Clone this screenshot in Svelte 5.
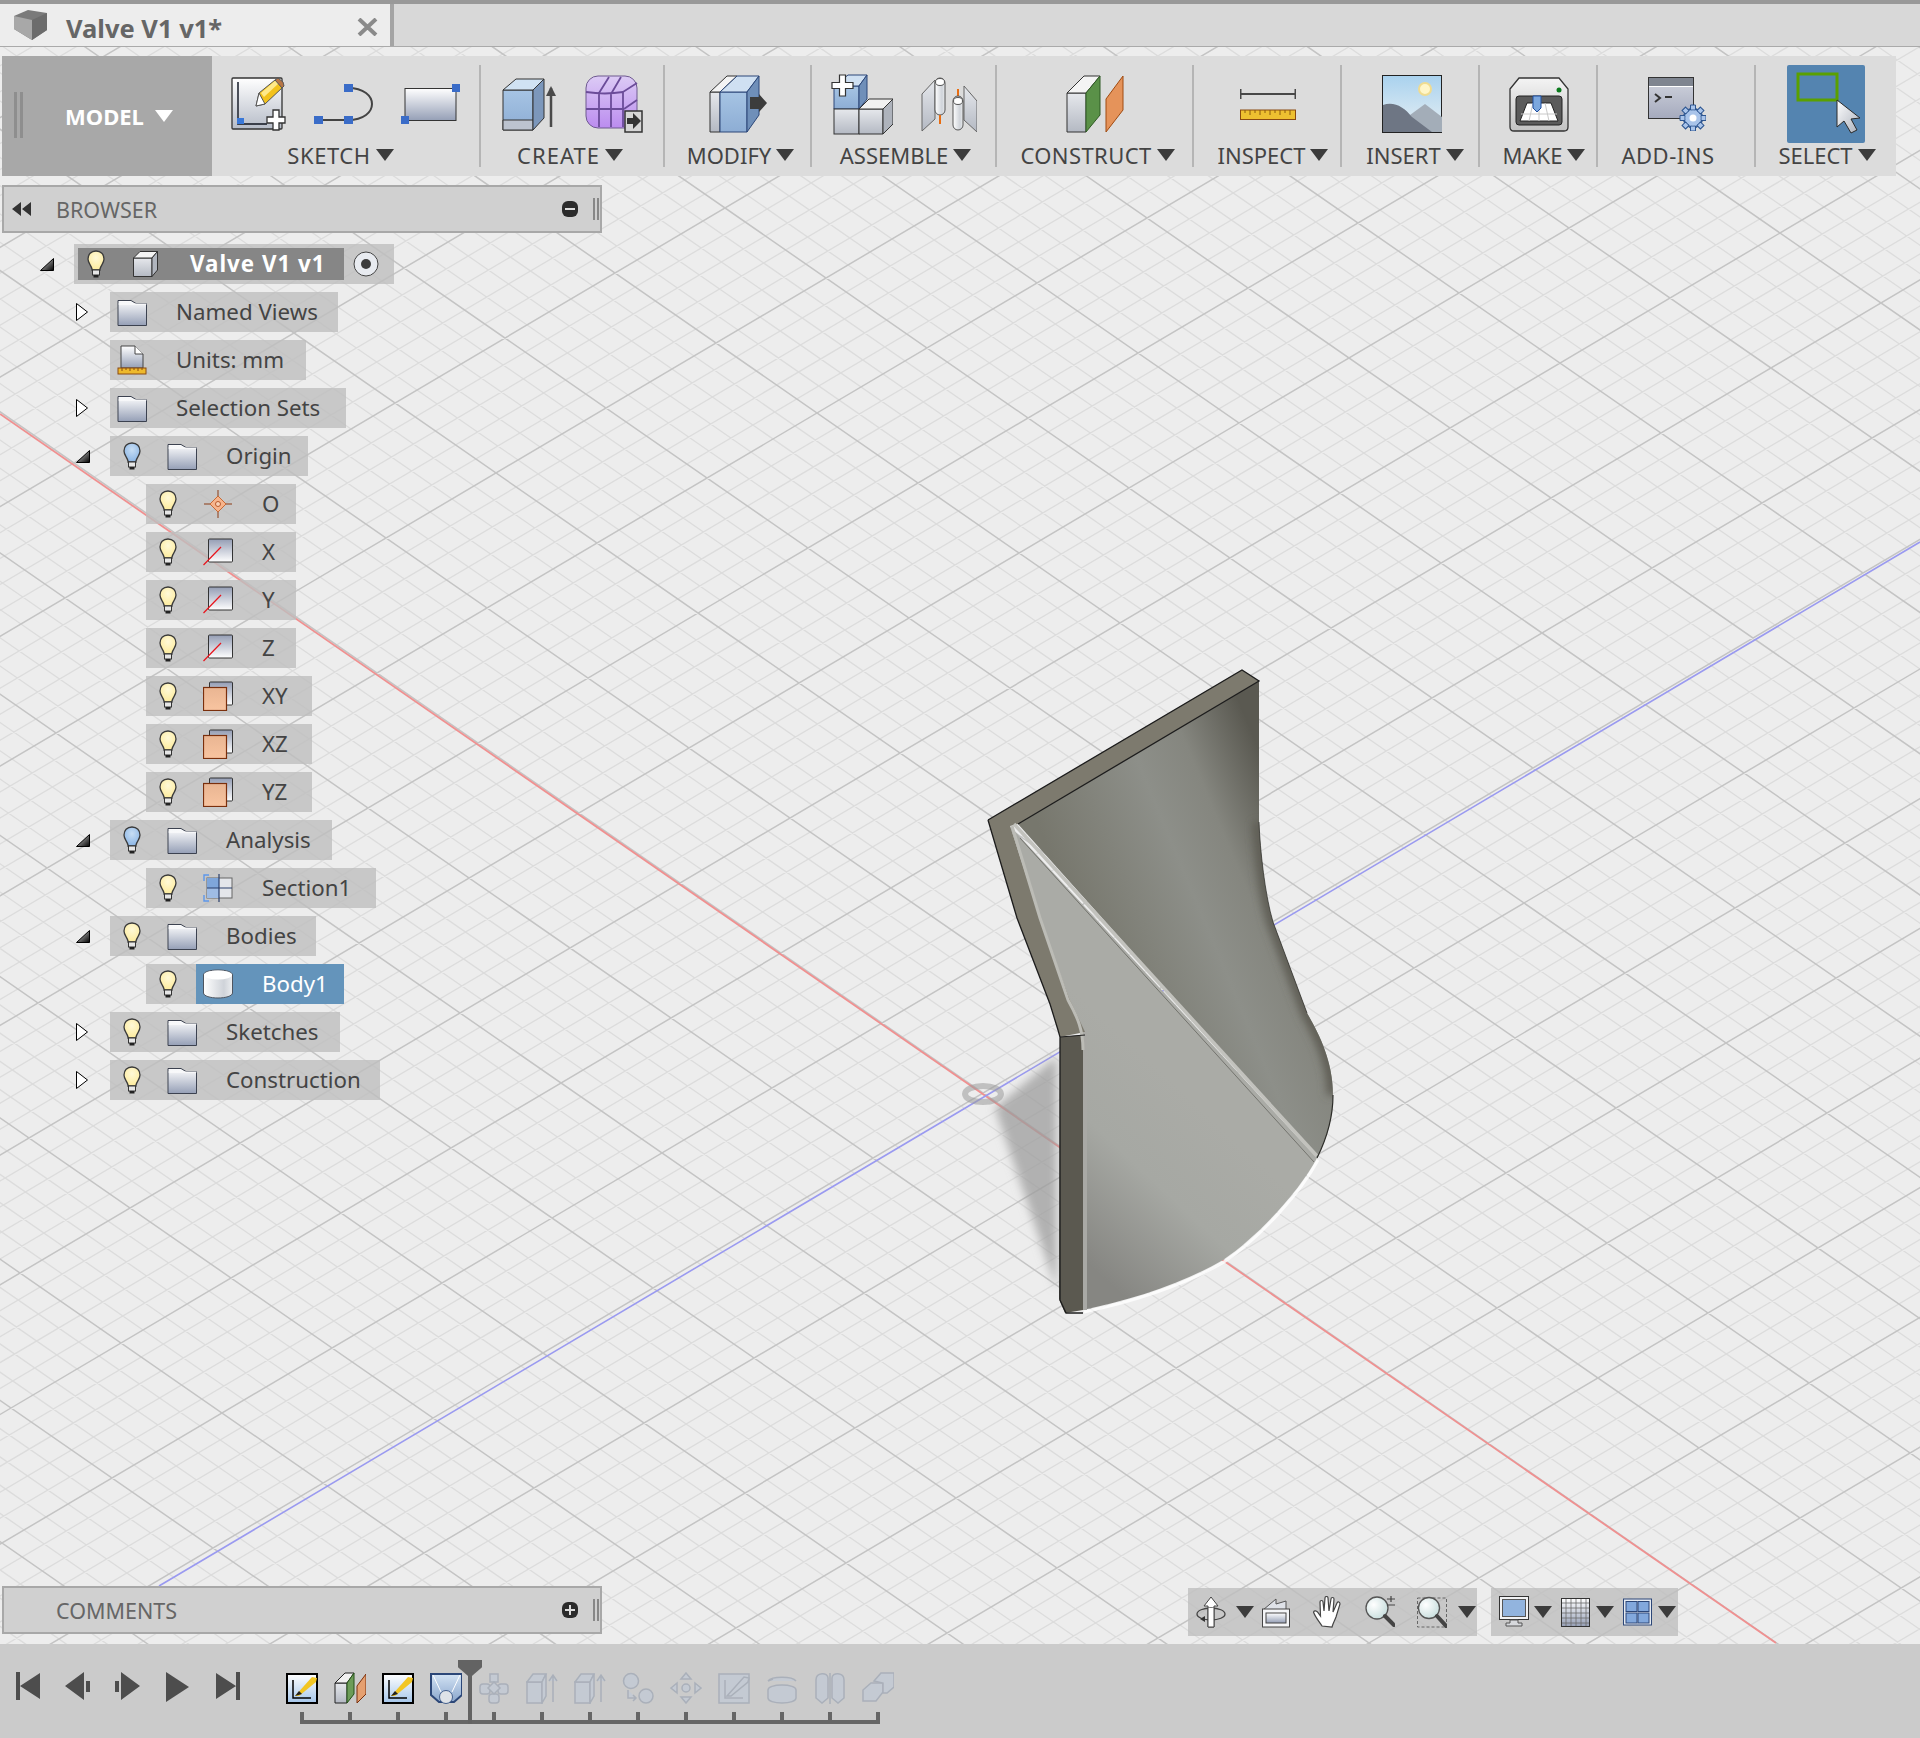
<script lang="ts">
	// viewport grid: linear approximation of the ground plane around the origin
	const ORIGIN = [983, 1093];
	const A = [101, 70];
	const B = [110, -65];
	const SUB = 5;

	function gridPath(major: boolean) {
		let d = '';
		const far = 30;
		for (let i = -150; i <= 150; i++) {
			const isMajor = i % SUB === 0;
			if (isMajor !== major) continue;
			const t = i / SUB;
			const ax = ORIGIN[0] + A[0] * t, ay = ORIGIN[1] + A[1] * t;
			const bx = ORIGIN[0] + B[0] * t, by = ORIGIN[1] + B[1] * t;
			d += `M${ax - B[0] * far} ${ay - B[1] * far}L${ax + B[0] * far} ${ay + B[1] * far}`;
			d += `M${bx - A[0] * far} ${by - A[1] * far}L${bx + A[0] * far} ${by + A[1] * far}`;
		}
		return d;
	}
	const MINOR = gridPath(false);
	const MAJOR = gridPath(true);

	const groups = [
		{ label: 'SKETCH', w: 269, shift: -5, ls: 0.6, ix: 0, icons: [['sketch', 55, 54], ['curve', 59, 40], ['rect', 59, 40]] },
		{ label: 'CREATE', w: 184, shift: -2, ls: 1, ix: 0, icons: [['box', 55, 53], ['form', 58, 58]] },
		{ label: 'MODIFY', w: 147, shift: 3, ls: 0, ix: 0, icons: [['modify', 58, 58]] },
		{ label: 'ASSEMBLE', w: 185, shift: 2, ls: 0, ix: 0, icons: [['assemble', 62, 61], ['joint', 56, 55]] },
		{ label: 'CONSTRUCT', w: 197, shift: 3, ls: 0.4, ix: 0, icons: [['construct', 58, 58]] },
		{ label: 'INSPECT', w: 148, shift: 6, ls: 0, ix: 1, icons: [['inspect', 56, 31]] },
		{ label: 'INSERT', w: 138, shift: 5, ls: 0, ix: 2, icons: [['insert', 60, 58]] },
		{ label: 'MAKE', w: 118, shift: 6, ls: 0, ix: 1, icons: [['make', 60, 55]] },
		{ label: 'ADD-INS', w: 158, shift: -8, ls: 0.5, ix: 1, icons: [['addins', 58, 54]], noArrow: true },
		{ label: 'SELECT', w: 140, shift: 1, ls: 0, ix: 0, icons: [['select', 78, 78]] }
	];

	const rows = [
		{ d: 1, tw: 'closed', icon: 'folder', text: 'Named Views', w: 228 },
		{ d: 1, icon: 'units', text: 'Units: mm', w: 196 },
		{ d: 1, tw: 'closed', icon: 'folder', text: 'Selection Sets', w: 236 },
		{ d: 1, tw: 'open', bulb: 'blue', icon: 'folder', text: 'Origin', w: 198 },
		{ d: 2, bulb: 'on', icon: 'point', text: 'O', w: 150 },
		{ d: 2, bulb: 'on', icon: 'axis', text: 'X', w: 150 },
		{ d: 2, bulb: 'on', icon: 'axis', text: 'Y', w: 150 },
		{ d: 2, bulb: 'on', icon: 'axis', text: 'Z', w: 150 },
		{ d: 2, bulb: 'on', icon: 'plane', text: 'XY', w: 166 },
		{ d: 2, bulb: 'on', icon: 'plane', text: 'XZ', w: 166 },
		{ d: 2, bulb: 'on', icon: 'plane', text: 'YZ', w: 166 },
		{ d: 1, tw: 'open', bulb: 'blue', icon: 'folder', text: 'Analysis', w: 222 },
		{ d: 2, bulb: 'on', icon: 'section', text: 'Section1', w: 230 },
		{ d: 1, tw: 'open', bulb: 'on', icon: 'folder', text: 'Bodies', w: 206 },
		{ d: 2, bulb: 'on', icon: 'cylinder', text: 'Body1', w: 198, selected: true },
		{ d: 1, tw: 'closed', bulb: 'on', icon: 'folder', text: 'Sketches', w: 230 },
		{ d: 1, tw: 'closed', bulb: 'on', icon: 'folder', text: 'Construction', w: 270 }
	];

	const steps = ['tsketch', 'tconstruct', 'tsketch', 'tsection', 'dmove', 'dbox', 'dbox', 'dalign', 'dpan', 'dsketch', 'drevolve', 'dmirror', 'dcombine'];

	const view1 = [
		{ n: 'orbit', w: 30, ml: 0 },
		{ n: 'arrow', w: 18, ml: 10 },
		{ n: 'camera', w: 28, ml: 8 },
		{ n: 'hand', w: 30, ml: 23 },
		{ n: 'zoom', w: 30, ml: 22 },
		{ n: 'fit', w: 30, ml: 22 },
		{ n: 'arrow', w: 18, ml: 11 }
	];
	const view2 = [
		{ n: 'monitor', w: 30, ml: 0 },
		{ n: 'arrow', w: 18, ml: 5 },
		{ n: 'gridview', w: 30, ml: 9 },
		{ n: 'arrow', w: 18, ml: 5 },
		{ n: 'layout', w: 30, ml: 9 },
		{ n: 'arrow', w: 18, ml: 5 }
	];
</script>

{#snippet bulb(kind)}
	<svg class="bulb" width="18" height="28" viewBox="0 0 18 28">
		<path d="M9 1C4 1 1 4.500 1 9c0 4 3 6 4 10v1h8v-1c1-4 4-6 4-10 0-4.500-3-8-8-8z" fill={kind === 'blue' ? 'url(#bulbBlue)' : 'url(#bulbOn)'} stroke="#3a3a3a" stroke-width="1.300" />
		<rect x="5.500" y="20" width="7" height="5" fill="#e6e6e6" stroke="#333" />
		<rect x="6.500" y="25" width="5" height="2.500" fill="#222" />
	</svg>
{/snippet}

{#snippet treeIcon(name)}
	<svg class="ticon" width="30" height="30" viewBox="0 0 30 30">
		{#if name === 'folder'}
			<path d="M1 3.500h13l5 3h10.500v22H1z" fill="url(#folder)" stroke="#3c4250" stroke-width="1" />
			<path d="M1.500 7h28" stroke="#fff" stroke-width="1" />
		{:else if name === 'units'}
			<path d="M4 1h14l8 8v14H4z" fill="url(#folder)" stroke="#444" />
			<path d="M18 1v8h8" fill="#fff" stroke="#444" />
			<rect x="1" y="23" width="28" height="6" fill="#eeb92c" stroke="#8a4b12" />
			<path d="M5 23v3M9 23v2M13 23v3M17 23v2M21 23v3M25 23v2" stroke="#8a4b12" />
		{:else if name === 'point'}
			<path d="M15 1v28M1 15h28" stroke="#8b3b15" />
			<path d="M15 7l8 8-8 8-8-8z" fill="#f6b48c" stroke="#c86a35" />
			<circle cx="15" cy="15" r="2.500" fill="#f9d2b8" stroke="#b85a2a" />
		{:else if name === 'axis'}
			<rect x="5.500" y="2" width="24" height="23" rx="1" fill="url(#axisFill)" stroke="#333" />
			<path d="M0.500 28L18 10" stroke="#e8141c" stroke-width="1.200" />
		{:else if name === 'plane'}
			<rect x="6.500" y="1" width="23" height="23" rx="1" fill="url(#axisFill)" stroke="#333" />
			<rect x="0.500" y="6.500" width="23" height="23" fill="url(#planeFill)" stroke="#7a2f0c" stroke-width="1.200" />
		{:else if name === 'section'}
			<rect x="4" y="5" width="25" height="20" fill="#e4e6ea" stroke="#666" />
			<rect x="4" y="5" width="12" height="10" fill="#7fa6da" />
			<rect x="4" y="15" width="12" height="10" fill="#9fbce4" />
			<path d="M16 1v28M4 15h25" stroke="#2a3e6a" stroke-width="1.200" />
			<path d="M6 2H1v6M1 22v6h5" fill="none" stroke="#5c96ea" stroke-width="1.400" />
		{:else if name === 'cylinder'}
			<path d="M0.500 6c0-3 6-5 14.500-5s14.500 2 14.500 5v18c0 3-7 5-14.500 5s-14.500-2-14.500-5z" fill="url(#cyl)" stroke="#4d5560" />
			<ellipse cx="15" cy="6" rx="14" ry="4.500" fill="#fff" />
		{/if}
	</svg>
{/snippet}

{#snippet toolIcon(name, w, h)}
	<svg width={w} height={h} viewBox="0 0 {w} {h}">
		{#if name === 'sketch'}
			<rect x="1" y="1" width="50" height="51" rx="1" fill="url(#paper)" stroke="#333" stroke-width="1.300" />
			<path d="M7 5v42h29" fill="none" stroke="#3a3f4a" stroke-width="1.800" />
			<rect x="6" y="41" width="7" height="6" fill="#3a78d8" />
			<path d="M25 29l3-13L44 3l8 7-18 17z" fill="#f3c21c" stroke="#555" />
			<path d="M30 16l15-13 3 3-15 14z" fill="#ffe98a" />
			<path d="M44 3l3-2 5 4 1 4-2 2z" fill="#b87545" stroke="#555" />
			<path d="M25 29l3-13 6 11z" fill="#fff" stroke="#555" />
			<path d="M42 33h6v7h6v6h-6v7h-6v-7h-6v-6h6z" fill="#fff" stroke="#333" stroke-width="1.300" />
		{:else if name === 'curve'}
			<path d="M4 36H34C50 36 58 28 58 20 58 12 50 4 34 4" fill="none" stroke="#444" stroke-width="2" />
			<rect x="0" y="32" width="9" height="8" fill="#3a6cc8" />
			<rect x="30" y="32" width="9" height="8" fill="#3a6cc8" />
			<rect x="30" y="0" width="9" height="8" fill="#3a6cc8" />
		{:else if name === 'rect'}
			<rect x="4" y="4.500" width="51" height="32" fill="url(#folder)" stroke="#333" />
			<rect x="51" y="0" width="8" height="8" fill="#3a6cc8" />
			<rect x="0" y="32" width="8" height="8" fill="#3a6cc8" />
		{:else if name === 'box'}
			<path d="M1 12H31V52H1z" fill="url(#blueFace)" stroke="#333" />
			<path d="M1 42H31V52H1z" fill="#bcc3cf" stroke="#333" />
			<path d="M1 12L14 1H42L31 12z" fill="#d0e2f3" stroke="#333" />
			<path d="M31 12L42 1V40L31 52z" fill="#7c97bb" stroke="#333" />
			<path d="M49 49V10" fill="none" stroke="#4a4a4a" stroke-width="2.500" />
			<path d="M44 18l5-10 5 10z" fill="#4a4a4a" />
		{:else if name === 'form'}
			<rect x="1" y="1" width="51" height="52" rx="12" fill="url(#purple)" stroke="#6e5a8f" />
			<path d="M1 17C14 19 26 19 38 17L52 8M1 34H39M14 18V52M26 19V52M38 17V52M14 18L24 2M26 19L36 2M39 34L52 25" fill="none" stroke="#6b4c99" stroke-width="1.800" />
			<rect x="40" y="36" width="17" height="21" fill="#d6d6d6" stroke="#333" stroke-width="1.500" />
			<path d="M42 43h6v-5l8 8-8 8v-5h-6z" fill="#333" />
		{:else if name === 'modify'}
			<path d="M1 17H11V57H1z" fill="url(#greyFace)" stroke="#333" />
			<path d="M1 17L18 1H28L11 17z" fill="#f4f4f4" stroke="#333" />
			<path d="M11 17H38V57H11z" fill="url(#blueFace)" stroke="#2c4778" />
			<path d="M11 17L28 1H50L38 17z" fill="#cfe0f2" stroke="#2c4778" />
			<path d="M38 17L50 1V40L38 57z" fill="#6f8fb9" stroke="#2c4778" />
			<path d="M41 22h9v-3l8 9-8 9v-3h-9z" fill="#3c3c3c" />
		{:else if name === 'assemble'}
			<path d="M3 12H28V35H3z" fill="url(#blueFace)" stroke="#2c4778" />
			<path d="M3 12L17 1H36L28 12z" fill="#cfe0f2" stroke="#2c4778" />
			<path d="M28 12L36 1V25L28 35z" fill="#6f8fb9" stroke="#2c4778" />
			<rect x="3" y="35" width="25" height="25" fill="url(#greyFace)" stroke="#333" />
			<path d="M28 35H52V60H28z" fill="url(#greyFace)" stroke="#333" />
			<path d="M28 35L38 25H62L52 35z" fill="#f1f1f1" stroke="#333" />
			<path d="M52 35L62 25V50L52 60z" fill="#aeb3bc" stroke="#333" />
			<path d="M8.500 1h6v7.500H22v6h-7.500V22h-6v-7.500H1v-6h7.500z" fill="#fff" stroke="#333" stroke-width="1.200" />
		{:else if name === 'joint'}
			<path d="M1 17L14 3V42L1 54z" fill="url(#greyFace)" stroke="#666" />
			<path d="M14 6a5 5 0 0 1 10 0v27a5 5 0 0 1-10 0z" fill="url(#cyl)" stroke="#555" />
			<ellipse cx="19" cy="5" rx="4.500" ry="3.500" fill="#fff" stroke="#555" />
			<path d="M19 38v9" stroke="#e86c10" stroke-width="2" />
			<path d="M37 12v14" stroke="#e86c10" stroke-width="2" />
			<path d="M43 9l13 15v31L43 43z" fill="url(#greyFace)" stroke="#666" />
			<path d="M32 24a5 5 0 0 1 10 0v24a5 5 0 0 1-10 0z" fill="url(#cyl)" stroke="#555" />
			<ellipse cx="37" cy="24" rx="4.500" ry="3.500" fill="#fff" stroke="#555" />
		{:else if name === 'construct'}
			<path d="M1 18H20V57H1z" fill="url(#greyFace)" stroke="#333" />
			<path d="M1 18L18 1H34L20 18z" fill="#f4f4f4" stroke="#333" />
			<path d="M20 18L34 1V40L20 57z" fill="#5a9148" stroke="#2f5a24" />
			<path d="M40 24L57 1V35L40 57z" fill="#e5935a" stroke="#a04a10" />
		{:else if name === 'inspect'}
			<path d="M0.500 0V10M55.500 0V10M0 5H56" fill="none" stroke="#484848" stroke-width="2" />
			<rect x="0.500" y="21" width="55" height="9.500" fill="#edc030" stroke="#8a4a10" />
			<path d="M5 21v3M10 21v5M15 21v3M20 21v5M25 21v3M30 21v5M35 21v3M40 21v5M45 21v3M50 21v5" stroke="#8a5a10" />
		{:else if name === 'insert'}
			<rect x="0.500" y="0.500" width="59" height="57" fill="url(#sky)" stroke="#222" />
			<circle cx="43" cy="14" r="6" fill="#fff6c8" stroke="#f0dc90" stroke-width="2" />
			<path d="M28 40L43 29 60 42V57H40z" fill="#a3adb8" />
			<path d="M1 30C12 26 22 32 30 42L50 57H1z" fill="#6e7684" />
		{:else if name === 'make'}
			<path d="M1 12L10 1H50L59 12V50Q59 54 55 54H5Q1 54 1 50z" fill="url(#makeBody)" stroke="#333" stroke-width="1.300" />
			<circle cx="50" cy="13" r="2.500" fill="#0a7a1c" />
			<rect x="7" y="19" width="46" height="29" rx="3" fill="#5b5b5b" stroke="#222" />
			<path d="M18 26H42L49 44H11z" fill="#fff" stroke="#222" />
			<path d="M12 37H48M24 26L20 44M36 26L40 44M30 26V44" stroke="#c8c8c8" />
			<path d="M24 19H32V31L28 35 24 31z" fill="#7ba7de" stroke="#1e4ea0" />
		{:else if name === 'addins'}
			<rect x="0.500" y="0.500" width="45" height="41" fill="url(#panelFill)" stroke="#333" />
			<rect x="1" y="1" width="44" height="8" fill="#7f8590" />
			<path d="M1 9.500H45" stroke="#fff" />
			<path d="M7 17l5 4-5 4" fill="none" stroke="#333" stroke-width="2" />
			<path d="M17 20h7" stroke="#333" stroke-width="2" />
			<g transform="translate(45 41)">
				<circle r="9.500" fill="#a9c4ea" stroke="#2d5590" stroke-width="1.500" />
				<path d="M-2.500-13h5v5h-5zM-2.500 8h5v5h-5zM-13-2.500h5v5h-5zM8-2.500h5v5h-5z" fill="#a9c4ea" stroke="#2d5590" />
				<path d="M-2.500-13h5v5h-5zM-2.500 8h5v5h-5zM-13-2.500h5v5h-5zM8-2.500h5v5h-5z" fill="#a9c4ea" stroke="#2d5590" transform="rotate(45)" />
				<circle r="7.500" fill="#a9c4ea" />
				<circle r="3.500" fill="#fff" />
			</g>
		{:else if name === 'select'}
			<rect width="78" height="78" rx="2" fill="#5484b0" />
			<rect x="11" y="9" width="39" height="26" fill="none" stroke="#5aa000" stroke-width="3" />
			<path d="M50 35V62l7-6 7 12 6-3-6-11 9-1z" fill="url(#cursorFill)" stroke="#2a2a2a" />
		{/if}
	</svg>
{/snippet}

{#snippet stepIcon(name)}
	<svg width="32" height="32" viewBox="0 0 32 32">
		{#if name === 'tsketch'}
			<rect x="1" y="2" width="30" height="29" fill="url(#sketchStep)" stroke="#000" stroke-width="2" />
			<path d="M7 8v18h18" fill="none" stroke="#000" stroke-width="1.500" />
			<path d="M9 24L26 5l5 1-1 4-17 14z" fill="#f2c624" />
			<path d="M9 24l4-5 3 3z" fill="#222" />
		{:else if name === 'tconstruct'}
			<path d="M1 11H13V31H1z" fill="url(#greyFace)" stroke="#222" />
			<path d="M1 11L11 1H20L13 11z" fill="#f1f1f1" stroke="#222" />
			<path d="M13 11L20 1V22L13 31z" fill="#6c9c58" stroke="#245018" />
			<path d="M23 14L32 2V22L23 31z" fill="#e5a070" stroke="#7a2f0c" />
		{:else if name === 'tsection'}
			<path d="M1 2H32V23L24 30H9L1 23z" fill="url(#shield)" stroke="#2c4778" stroke-width="2" />
			<path d="M3 3L11 20M30 3L22 20" stroke="#fff" />
			<circle cx="16" cy="25" r="6.500" fill="#dfe3e8" stroke="#44608e" />
		{:else}
			<g class="dim">
				{#if name === 'dmove'}
					<rect x="12" y="2" width="8" height="8" />
					<rect x="2" y="12" width="10" height="10" rx="3" />
					<rect x="20" y="12" width="10" height="10" rx="3" />
					<rect x="11" y="22" width="10" height="9" rx="3" />
					<path d="M16 10l6 6-6 6-6-6z" />
				{:else if name === 'dbox'}
					<path d="M1 10H16V31H1z" />
					<path d="M1 10L7 2H20L16 10z" />
					<path d="M16 10L20 2V24L16 31z" />
					<path d="M27 30V3M23 9l4-6 4 6" fill="none" />
				{:else if name === 'dalign'}
					<circle cx="9" cy="9" r="7.500" />
					<circle cx="24" cy="24" r="7" />
					<path d="M6 18v8h8M11 23l3 3-3 3" fill="none" stroke="#7ea6d8" stroke-width="2" />
				{:else if name === 'dpan'}
					<circle cx="16" cy="16" r="4" />
					<path d="M16 1l5 6H11zM16 31l5-6H11zM1 16l6-5v10zM31 16l-6-5v10z" fill="#a6a9ae" stroke="none" />
				{:else if name === 'dsketch'}
					<rect x="1" y="2" width="30" height="29" fill="#c9d0d8" stroke="#a8a8a8" stroke-width="2" />
					<path d="M7 8v18h18" fill="none" stroke="#9c9c9c" stroke-width="1.500" />
					<path d="M9 24L26 5l5 1-1 4-17 14z" fill="#e0cc80" stroke="none" />
				{:else if name === 'drevolve'}
					<path d="M2 18c0-3 6-5 14-5s14 2 14 5v8c0 3-6 5-14 5s-14-2-14-5z" />
					<path d="M2 9c4-5 24-5 28 0M2 9l5-2" fill="none" />
				{:else if name === 'dmirror'}
					<path d="M2 8c0-8 12-8 12-2v20l-6 5-6-5zM30 8c0-8-12-8-12-2v20l6 5 6-5z" />
					<path d="M16 1v31" fill="none" />
				{:else if name === 'dcombine'}
					<path d="M1 18l8-7h12v9l-7 9H1z" />
					<path d="M12 9l7-8h13v14l-7 6h-4V11z" />
				{/if}
			</g>
		{/if}
	</svg>
{/snippet}

{#snippet viewIcon(name, w)}
	{#if name === 'arrow'}
		<span class="tri dark view-tri"></span>
	{:else}
		<svg width={w} height="32" viewBox="0 0 {w} 32">
			{#if name === 'orbit'}
				<path d="M15 1l7 9h-4v21h-6V10H8z" fill="#fff" stroke="#444" />
				<ellipse cx="15" cy="18" rx="14" ry="6" fill="none" stroke="#444" stroke-width="1.300" />
				<path d="M12 12h6v19h-6z" fill="#fff" />
				<path d="M12 12v19h6V12" fill="none" stroke="#444" />
				<path d="M9 20l-5 3 5 3z" fill="#333" />
			{:else if name === 'camera'}
				<path d="M1 14L14 3v5l10-3v9" fill="#dfe2e8" stroke="#555" />
				<rect x="0.500" y="13" width="27" height="18" fill="#f4f5f7" stroke="#444" />
				<rect x="4" y="17" width="20" height="10" fill="url(#folder)" stroke="#444" />
			{:else if name === 'hand'}
				<path d="M9 30C6 25 2 21 0.500 16c1-2 3-1 4 0l3 4L7 6c0-2 3-2 3 0l1 9 1-13c0-2 3-2 3 0l1 13 2-12c0-2 3-2 3 0l-1 13 4-9c1-2 3-1 3 1l-4 13c-1 3-3 6-4 10z" fill="#fff" stroke="#444" stroke-width="1.200" />
			{:else if name === 'zoom'}
				<circle cx="12" cy="12" r="11" fill="url(#lens)" stroke="#555" stroke-width="1.300" />
				<path d="M20 20l9 9" stroke="#444" stroke-width="4" stroke-linecap="round" />
				<path d="M22 3h8M26 0v6M22 9h8" stroke="#444" stroke-width="1.200" fill="none" />
			{:else if name === 'fit'}
				<rect x="0.500" y="2" width="29" height="29" fill="none" stroke="#666" stroke-dasharray="3 2" />
				<circle cx="12" cy="12" r="10.500" fill="url(#lens)" stroke="#555" stroke-width="1.300" />
				<path d="M20 20l9 10" stroke="#444" stroke-width="4" stroke-linecap="round" />
			{:else if name === 'monitor'}
				<rect x="0.500" y="0.500" width="29" height="23" fill="#f1f2f4" stroke="#333" />
				<rect x="3.500" y="3.500" width="23" height="17" fill="#92b4de" stroke="#555" />
				<path d="M11 24h8v3h4v3H7v-3h4z" fill="#d6d8dc" stroke="#555" />
			{:else if name === 'gridview'}
				<rect x="0.500" y="2.500" width="28" height="28" fill="url(#folder)" stroke="#333" />
				<path d="M5 3v27M10 3v27M15 3v27M20 3v27M25 3v27M1 7h27M1 12h27M1 17h27M1 22h27M1 27h27" stroke="#6a6a6a" stroke-width=".8" />
			{:else if name === 'layout'}
				<rect x="0.500" y="3" width="28" height="26" fill="#e6ebf2" stroke="#2c4778" />
				<rect x="3" y="5.500" width="11" height="10" fill="#82a8dc" stroke="#2c4778" />
				<rect x="15" y="5.500" width="11" height="10" fill="#82a8dc" stroke="#2c4778" />
				<rect x="3" y="17" width="11" height="10" fill="#82a8dc" stroke="#2c4778" />
				<rect x="15" y="17" width="11" height="10" fill="#82a8dc" stroke="#2c4778" />
			{/if}
		</svg>
	{/if}
{/snippet}

{#snippet panel(title, sign)}
	<div class="panel">
		{#if sign === 'minus'}
			<svg class="back" width="19" height="14" viewBox="0 0 19 14"><path d="M9 0v14L0 7zM19 0v14l-9-7z" fill="#333" /></svg>
		{/if}
		<span class="panel-title">{title}</span>
		<svg class="pill" width="16" height="16" viewBox="0 0 16 16">
			<rect width="16" height="16" rx="6" fill="#2b2b2b" />
			<path d={sign === 'minus' ? 'M3 8h10' : 'M3 8h10M8 3v10'} stroke="#ddd" stroke-width="2" />
		</svg>
		<span class="grip"></span>
	</div>
{/snippet}

<div class="app">
	<svg class="viewport" viewBox="0 0 1920 1738" width="1920" height="1738">
		<defs>
			<linearGradient id="paper" x1="0" y1="0" x2="0" y2="1"><stop offset="0" stop-color="#fff" /><stop offset="1" stop-color="#b6bcc8" /></linearGradient>
			<linearGradient id="folder" x1="0" y1="0" x2="0" y2="1"><stop offset="0" stop-color="#fff" /><stop offset="1" stop-color="#959fb6" /></linearGradient>
			<linearGradient id="axisFill" x1="0" y1="0" x2="0" y2="1"><stop offset="0" stop-color="#949db4" /><stop offset="1" stop-color="#fff" /></linearGradient>
			<linearGradient id="planeFill" x1="0" y1="0" x2="0" y2="1"><stop offset="0" stop-color="#e9b592" /><stop offset="1" stop-color="#f8c4a0" /></linearGradient>
			<linearGradient id="blueFace" x1="0" y1="0" x2="0" y2="1"><stop offset="0" stop-color="#a6c4e4" /><stop offset="1" stop-color="#8dadd4" /></linearGradient>
			<linearGradient id="greyFace" x1="0" y1="0" x2="0" y2="1"><stop offset="0" stop-color="#e6e8ec" /><stop offset="1" stop-color="#b4b9c3" /></linearGradient>
			<linearGradient id="purple" x1="0" y1="0" x2="0" y2="1"><stop offset="0" stop-color="#dccbf5" /><stop offset="1" stop-color="#bb8cef" /></linearGradient>
			<linearGradient id="sky" x1="0" y1="0" x2="0" y2="1"><stop offset="0" stop-color="#a9d2ee" /><stop offset="1" stop-color="#e9f0f4" /></linearGradient>
			<linearGradient id="makeBody" x1="0" y1="0" x2="0" y2="1"><stop offset="0" stop-color="#f4f4f4" /><stop offset="1" stop-color="#c2c2c2" /></linearGradient>
			<linearGradient id="panelFill" x1="0" y1="0" x2="0" y2="1"><stop offset="0" stop-color="#d2d5df" /><stop offset="1" stop-color="#a5aabd" /></linearGradient>
			<linearGradient id="cursorFill" x1="0" y1="0" x2="1" y2="1"><stop offset="0" stop-color="#fff" /><stop offset="1" stop-color="#aab0bb" /></linearGradient>
			<linearGradient id="cyl" x1="0" y1="0" x2="1" y2="0"><stop offset="0" stop-color="#fff" /><stop offset=".7" stop-color="#cfd3d9" /><stop offset="1" stop-color="#eceef0" /></linearGradient>
			<linearGradient id="sketchStep" x1="0" y1="0" x2="0" y2="1"><stop offset="0" stop-color="#fff" /><stop offset="1" stop-color="#a5c6ea" /></linearGradient>
			<linearGradient id="shield" x1="0" y1="0" x2="0" y2="1"><stop offset="0" stop-color="#d3e3f4" /><stop offset="1" stop-color="#8aa6cc" /></linearGradient>
			<linearGradient id="twist" x1="0" y1="0" x2="1" y2="1"><stop offset="0" stop-color="#ddd" /><stop offset="1" stop-color="#000" /></linearGradient>
			<radialGradient id="bulbOn" cx=".5" cy=".35" r=".6"><stop offset="0" stop-color="#fff9d8" /><stop offset="1" stop-color="#fdeca0" /></radialGradient>
			<radialGradient id="bulbBlue" cx=".5" cy=".35" r=".6"><stop offset="0" stop-color="#c8def4" /><stop offset="1" stop-color="#8fb8e6" /></radialGradient>
			<radialGradient id="lens" cx=".35" cy=".35" r=".7"><stop offset="0" stop-color="#fff" /><stop offset="1" stop-color="#c8dedd" /></radialGradient>

			<linearGradient id="backFace" gradientUnits="userSpaceOnUse" x1="1040" y1="830" x2="1255" y2="740">
				<stop offset="0" stop-color="#77776d" /><stop offset=".5" stop-color="#8d8f89" /><stop offset=".72" stop-color="#85867f" /><stop offset="1" stop-color="#5a5951" />
			</linearGradient>
			<linearGradient id="frontFace" gradientUnits="userSpaceOnUse" x1="1095" y1="1270" x2="1225" y2="1130">
				<stop offset="0" stop-color="#868682" /><stop offset=".55" stop-color="#a6a8a3" /><stop offset="1" stop-color="#aaaba6" />
			</linearGradient>
			<filter id="soft" x="-50%" y="-50%" width="200%" height="200%"><feGaussianBlur stdDeviation="5" /></filter>
			<filter id="softer" x="-50%" y="-50%" width="200%" height="200%"><feGaussianBlur stdDeviation="4" /></filter>
			<clipPath id="backClip">
				<path d="M1018 824L1259 681V822C1260 850 1265 895 1273 922L1307 1013C1318 1032 1333 1060 1333 1095 1333 1120 1326 1140 1317 1158z" />
			</clipPath>
			<clipPath id="frontClip">
				<path d="M1010 826L1317 1158C1300 1190 1260 1235 1223 1260 1180 1285 1130 1300 1083 1310V1032L1070 1000 1040 918z" />
			</clipPath>
		</defs>

		<rect width="1920" height="1738" fill="#ededed" />
		<path d={MINOR} stroke="#dcdcdc" stroke-width="1.300" fill="none" />
		<path d={MAJOR} stroke="#c4c4c4" stroke-width="1.500" fill="none" />
		<path d="M0 414L1776 1643" stroke="#f09090" stroke-width="1.800" />
		<path d="M159 1586L1920 542" stroke="#9a9af0" stroke-width="1.600" />

		<!-- origin marker and ground shadow -->
		<path d="M995 1108L1057 1056V1290z" fill="#9c9c9c" fill-opacity=".75" filter="url(#soft)" />
		<ellipse cx="983" cy="1094" rx="18" ry="8" fill="none" stroke="#9a9a9a" stroke-opacity=".55" stroke-width="6" />

		<!-- valve body -->
		<path d="M1318 1160C1301 1192 1261 1237 1224 1262 1181 1287 1131 1302 1084 1312" fill="none" stroke="#fff" stroke-width="3" stroke-opacity=".8" />
		<path d="M1018 824L1259 681V822C1260 850 1265 895 1273 922L1307 1013C1318 1032 1333 1060 1333 1095 1333 1120 1326 1140 1317 1158z" fill="url(#backFace)" />
		<g clip-path="url(#backClip)">
			<path d="M1259 822C1260 850 1265 895 1273 922L1307 1013C1318 1032 1333 1060 1333 1095" fill="none" stroke="#5e5d54" stroke-width="12" filter="url(#softer)" />
		</g>
		<path d="M1010 826L1317 1158C1300 1190 1260 1235 1223 1260 1180 1285 1130 1300 1083 1310V1032L1070 1000 1040 918z" fill="url(#frontFace)" />
		<g clip-path="url(#frontClip)">
			<path d="M1092 1040V1300" stroke="#7f7f7a" stroke-width="16" filter="url(#soft)" />
		</g>
		<path d="M988 820L1242 670 1259 681 1018 824 1010 826 1040 918 1070 1000 1085 1032 1060 1037 1058 1030 1050 1004 1017 918z" fill="#7d7a6e" />
		<path d="M1060 1037L1083 1035V1310L1065 1313 1059 1299z" fill="#5b5950" />
		<path d="M1085 1032V1310" stroke="#a9a9a5" stroke-width="4" fill="none" />
		<path d="M1012 826L1040 918 1068 1000C1078 1018 1083 1030 1083 1050" fill="none" stroke="#bcbcb6" stroke-width="3" />
		<path d="M1014 824L1317 1156" stroke="#c2c2bd" stroke-width="3.500" />
		<path d="M1020 838L1314 1162" stroke="#50504a" stroke-width="1" stroke-opacity=".6" />
		<path d="M988 820L1242 670 1259 681 1018 824" fill="none" stroke="#1c1c1c" stroke-width="1.300" />
		<path d="M988 820L1017 918 1050 1004 1058 1030 1060 1037V1300L1066 1313H1083" fill="none" stroke="#1c1c1c" stroke-width="1.300" />
		<path d="M1060 1037L1085 1035" stroke="#1c1c1c" stroke-width="1" />
		<path d="M1259 822C1260 850 1265 895 1273 922L1307 1013" fill="none" stroke="#2c2c28" stroke-width="1" stroke-opacity=".7" />
		<path d="M1333 1095C1333 1120 1326 1140 1317 1158" fill="none" stroke="#2c2c28" stroke-width="1.200" />
	</svg>

	<header class="tabs">
		<div class="tab">
			<svg width="34" height="30" viewBox="0 0 34 30">
				<path d="M1 6L15 0 34 3V20L19 30 1 19z" fill="#7a7a7a" />
				<path d="M1 6L19 10V30L1 19z" fill="#a8a8a8" />
				<path d="M19 10L34 3V20L19 30z" fill="#6c6c6c" />
			</svg>
			<span class="tab-title">Valve V1 v1*</span>
			<svg class="close" width="21" height="18" viewBox="0 0 21 18"><path d="M2 1l17 16M19 1L2 17" stroke="#8a8a8a" stroke-width="4" /></svg>
		</div>
	</header>

	<nav class="toolbar">
		<div class="model">
			<span class="model-grip"></span>
			<span class="model-label">MODEL</span>
			<span class="tri light"></span>
		</div>
		{#each groups as g, i}
			<div class="group" class:last={i === groups.length - 1} style="width: {g.w}px">
				<div class="icons" style="transform: translateX({g.ix}px)">
					{#each g.icons as ic}
						{@render toolIcon(ic[0], ic[1], ic[2])}
					{/each}
				</div>
				<div class="label" style="transform: translateX({g.shift}px)">
					<span style="letter-spacing: {g.ls}px">{g.label}</span>
					{#if !g.noArrow}<span class="tri dark"></span>{/if}
				</div>
			</div>
		{/each}
	</nav>

	<main class="main">
		{@render panel('BROWSER', 'minus')}

		<ul class="tree">
			<li class="row d0">
				<span class="twisty"><svg width="14" height="13" viewBox="0 0 14 13"><path d="M13.500 0.500V12.500H0.500z" fill="url(#twist)" stroke="#000" /></svg></span>
				<div class="pill-row root" style="width: 320px">
					<div class="root-head">
						{@render bulb('on')}
						<svg class="root-cube" width="25" height="26" viewBox="0 0 25 26">
							<path d="M0.500 7H19V25.500H0.500z" fill="url(#greyFace)" stroke="#333" />
							<path d="M0.500 7L7 0.500H24.500L19 7z" fill="#f4f4f4" stroke="#333" />
							<path d="M19 7L24.500 0.500V19L19 25.500z" fill="#b0b5be" stroke="#333" />
						</svg>
						<span class="root-name">Valve V1 v1</span>
					</div>
					<svg class="radio" width="26" height="26" viewBox="0 0 26 26">
						<circle cx="13" cy="13" r="12" fill="#e8ebf0" stroke="#444" />
						<circle cx="13" cy="13" r="5" fill="#3c3c3c" />
					</svg>
				</div>
			</li>
			{#each rows as r}
				<li class="row" class:d1={r.d === 1} class:d2={r.d === 2}>
					<span class="twisty">
						{#if r.tw === 'closed'}
							<svg width="12" height="18" viewBox="0 0 12 18"><path d="M0.500 0.500L11.500 9 0.500 17.500z" fill="#fff" stroke="#000" /></svg>
						{:else if r.tw === 'open'}
							<svg width="14" height="13" viewBox="0 0 14 13"><path d="M13.500 0.500V12.500H0.500z" fill="url(#twist)" stroke="#000" /></svg>
						{/if}
					</span>
					<div class="pill-row" style="width: {r.w}px">
						{#if r.bulb}{@render bulb(r.bulb)}{/if}
						{#if r.selected}
							<div class="selected">
								{@render treeIcon(r.icon)}
								<span class="name">{r.text}</span>
							</div>
						{:else}
							<span class="icon-slot" class:plain={!r.bulb}>{@render treeIcon(r.icon)}</span>
							<span class="name">{r.text}</span>
						{/if}
					</div>
				</li>
			{/each}
		</ul>

		<div class="bottom-row">
			{@render panel('COMMENTS', 'plus')}
			<div class="view-bar first">
				{#each view1 as v}
					<span class="view-item" style="margin-left: {v.ml}px">{@render viewIcon(v.n, v.w)}</span>
				{/each}
			</div>
			<div class="view-bar second">
				{#each view2 as v}
					<span class="view-item" style="margin-left: {v.ml}px">{@render viewIcon(v.n, v.w)}</span>
				{/each}
			</div>
		</div>
	</main>

	<footer class="timeline-bar">
		<div class="transport">
			<svg width="24" height="28" viewBox="0 0 24 28"><path d="M0 0h4v28H0zM24 1v26L4 14z" fill="#4d4d4d" /></svg>
			<svg width="25" height="28" viewBox="0 0 25 28"><path d="M19 0v28L0 14zM21 9h4v11h-4z" fill="#4d4d4d" /></svg>
			<svg width="25" height="28" viewBox="0 0 25 28"><path d="M0 9h4v11H0zM6 0v28l19-14z" fill="#4d4d4d" /></svg>
			<svg class="play" width="23" height="30" viewBox="0 0 23 30"><path d="M0 0v30l23-15z" fill="#4d4d4d" /></svg>
			<svg class="end" width="24" height="28" viewBox="0 0 24 28"><path d="M0 1v26l20-13zM20 0h4v28h-4z" fill="#4d4d4d" /></svg>
		</div>
		<div class="timeline">
			<span class="rail"></span>
			{#each steps as s}
				<div class="step">
					{@render stepIcon(s)}
					<span class="tick"></span>
				</div>
			{/each}
			<span class="marker"></span>
			<span class="marker-stem"></span>
		</div>
	</footer>
</div>

<style>
	:global(body) {
		margin: 0;
		background: #ededed;
	}

	.app {
		position: relative;
		display: flex;
		flex-direction: column;
		width: 1920px;
		height: 1738px;
		overflow: hidden;
		font-family: 'Noto Sans', 'Liberation Sans', sans-serif;
		color: #444;
	}

	.viewport {
		position: absolute;
		top: 0;
		left: 0;
	}

	/* document tabs */
	.tabs {
		position: relative;
		box-sizing: border-box;
		height: 47px;
		border-top: 4px solid #999;
		border-bottom: 1px solid #aaa;
		background: #d8d8d8;
	}

	.tab {
		display: flex;
		align-items: center;
		box-sizing: border-box;
		width: 394px;
		height: 42px;
		padding-left: 13px;
		border-right: 4px solid #a4a4a4;
		background: #ededed;
	}

	.tab-title {
		margin-top: 7px;
		margin-left: 19px;
		color: #666;
		font-size: 25.500px;
		font-weight: 700;
		line-height: 1;
	}

	.close {
		margin-top: 4px;
		margin-left: auto;
		margin-right: 12px;
	}

	/* ribbon */
	.toolbar {
		position: relative;
		display: flex;
		width: 1894px;
		height: 120px;
		margin: 9px 0 0 2px;
		background: #dcdcdc;
	}

	.model {
		position: relative;
		display: flex;
		align-items: center;
		box-sizing: border-box;
		width: 210px;
		padding-left: 63px;
		background: #a8a8a8;
		color: #fff;
		font-size: 22px;
		font-weight: 700;
	}

	.model-grip {
		position: absolute;
		top: 36px;
		left: 12px;
		width: 3px;
		height: 46px;
		border-right: 3px solid #8e8e8e;
		border-left: 3px solid #8e8e8e;
	}

	.model-label {
		margin-right: 11px;
	}

	.group {
		box-sizing: border-box;
		height: 102px;
		margin-top: 9px;
		border-right: 2px solid #b5b5b5;
	}

	.group.last {
		border-right: 0;
	}

	.icons {
		display: flex;
		align-items: center;
		justify-content: center;
		gap: 28px;
		height: 78px;
	}

	.icons svg {
		display: block;
	}

	.label {
		display: flex;
		align-items: center;
		justify-content: center;
		gap: 5px;
		height: 24px;
		color: #444;
		font-size: 22px;
		line-height: 24px;
		white-space: nowrap;
	}

	.tri {
		display: inline-block;
		width: 0;
		height: 0;
		border-top: 12px solid #3c3c3c;
		border-right: 9px solid transparent;
		border-left: 9px solid transparent;
	}

	.tri.light {
		border-top-color: #fff;
	}

	/* browser and comments headers */
	.main {
		position: relative;
		display: flex;
		flex: 1;
		flex-direction: column;
		padding: 9px 0 8px 2px;
	}

	.panel {
		position: relative;
		display: flex;
		align-items: center;
		box-sizing: border-box;
		width: 600px;
		height: 48px;
		padding-left: 52px;
		border: 2px solid #a8a8a8;
		background: #d0d0d0;
	}

	.back {
		position: absolute;
		left: 8px;
	}

	.panel-title {
		color: #666;
		font-size: 21.500px;
	}

	.pill {
		margin-left: auto;
		margin-right: 15px;
	}

	.grip {
		width: 2px;
		height: 22px;
		margin-right: 1px;
		border-right: 2px solid #888;
		border-left: 2px solid #888;
	}

	/* tree */
	.tree {
		display: flex;
		flex-direction: column;
		gap: 8px;
		margin: 11px 0 0;
		padding: 0;
		list-style: none;
	}

	.row {
		display: flex;
		align-items: center;
		height: 40px;
		margin-left: 36px;
	}

	.row.d1 {
		margin-left: 72px;
	}

	.row.d2 {
		margin-left: 108px;
	}

	.twisty {
		display: flex;
		flex: 0 0 36px;
		align-items: center;
		padding-left: 2px;
		box-sizing: border-box;
	}

	.pill-row {
		display: flex;
		align-items: center;
		box-sizing: border-box;
		height: 40px;
		padding-left: 13px;
		background: rgb(190 190 190 / 80%);
		font-size: 22.300px;
		white-space: nowrap;
	}

	.bulb,
	.ticon {
		display: block;
		flex: none;
	}

	.icon-slot {
		margin-left: 26px;
	}

	.icon-slot.plain {
		margin-left: -6px;
	}

	.name {
		margin-bottom: 2px;
		margin-left: 29px;
		color: #444;
	}

	.selected {
		display: flex;
		align-items: center;
		align-self: stretch;
		flex: 1;
		margin-left: 19px;
		padding-left: 7px;
		background: #6494bb;
	}

	.selected .name {
		color: #fff;
	}

	.pill-row.root {
		padding-left: 4px;
	}

	.root-head {
		display: flex;
		align-items: center;
		width: 266px;
		height: 32px;
		padding-left: 9px;
		box-sizing: border-box;
		background: #868686;
	}

	.root-cube {
		margin-left: 28px;
	}

	.root-name {
		margin-bottom: 2px;
		margin-left: 32px;
		color: #fff;
		font-weight: 700;
		letter-spacing: 1px;
	}

	.radio {
		margin-left: 9px;
	}

	/* bottom overlays */
	.bottom-row {
		display: flex;
		align-items: flex-start;
		margin-top: auto;
	}

	.view-bar {
		display: flex;
		align-items: center;
		box-sizing: border-box;
		height: 48px;
		margin-top: 2px;
		padding-left: 8px;
		background: rgb(190 190 190 / 80%);
	}

	.view-bar.first {
		width: 289px;
		margin-left: 586px;
	}

	.view-bar.second {
		width: 187px;
		margin-left: 14px;
	}

	.view-item {
		display: flex;
		align-items: center;
	}

	.view-tri {
		display: block;
	}

	/* timeline */
	.timeline-bar {
		position: relative;
		display: flex;
		align-items: flex-start;
		box-sizing: border-box;
		height: 94px;
		padding: 28px 0 0 16px;
		background: #cbcbcb;
	}

	.transport {
		display: flex;
		gap: 25px;
		width: 224px;
	}

	.transport .play {
		margin-left: 1px;
	}

	.transport .end {
		margin-left: 2px;
	}

	.timeline {
		position: relative;
		display: flex;
		gap: 16px;
		margin-left: 46px;
	}

	.step {
		display: flex;
		flex-direction: column;
		align-items: center;
		width: 32px;
	}

	.step svg {
		display: block;
	}

	.tick {
		width: 4px;
		height: 12px;
		margin-top: 8px;
		background: #666;
	}

	.rail {
		position: absolute;
		bottom: 0;
		left: 16px;
		width: 578px;
		height: 4px;
		background: #666;
	}

	.marker {
		position: absolute;
		top: -12px;
		left: 172px;
		width: 24px;
		height: 16px;
		background: #636363;
		clip-path: polygon(0 0, 100% 0, 100% 45%, 58% 100%, 42% 100%, 0 45%);
	}

	.marker-stem {
		position: absolute;
		top: 0;
		bottom: 0;
		left: 182px;
		width: 4px;
		background: #636363;
	}

	.dim :global(*) {
		fill: #c4cad3;
		stroke: #aab0ba;
		stroke-width: 1.500;
	}
</style>
